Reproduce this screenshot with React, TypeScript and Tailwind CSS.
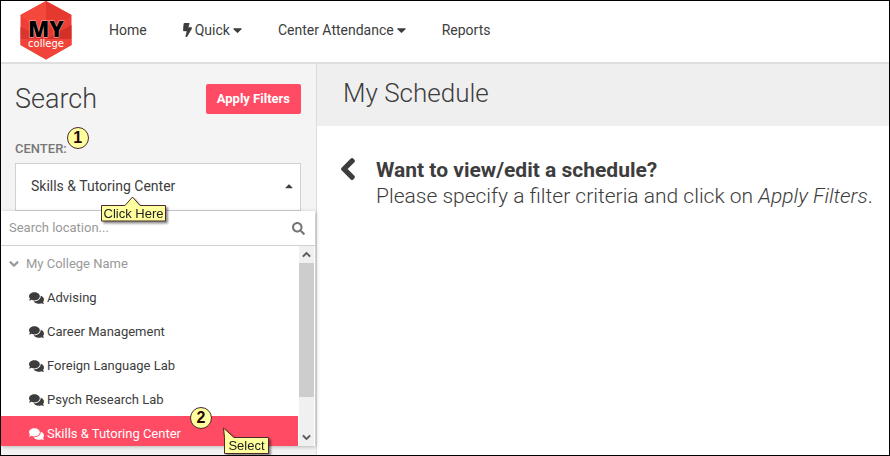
import { FaBolt, FaCaretDown, FaCaretUp, FaChevronDown, FaChevronLeft, FaChevronUp, FaComments, FaSearch } from "react-icons/fa";

const centers = [
  "Advising",
  "Career Management",
  "Foreign Language Lab",
  "Psych Research Lab",
  "Skills & Tutoring Center",
];

const selected = "Skills & Tutoring Center";

function App() {
  return (
    <div className="flex min-h-screen flex-col border border-black bg-white font-['Roboto',sans-serif] text-[#3d3d3d]">
      <Header />
      <div className="flex flex-1">
        <Sidebar />
        <main className="flex-1">
          <div className="bg-[#efefef] px-[26px] pt-3 pb-4">
            <h1 className="text-[26px] leading-[34px] font-light">My Schedule</h1>
          </div>
          <div className="flex gap-5 pt-[31px] pr-2 pl-[23px]">
            <FaChevronLeft className="h-6 w-4 shrink-0 stroke-current stroke-[30px]" />
            <div className="text-[21px] leading-[26px]">
              <h2 className="font-bold">Want to view/edit a schedule?</h2>
              <p className="font-light">
                Please specify a filter criteria and click on <em>Apply Filters</em>.
              </p>
            </div>
          </div>
        </main>
      </div>
    </div>
  );
}

export default App;

function Header() {
  return (
    <header className="flex h-[63px] items-center border-b-2 border-[#dedede] pl-[19px]">
      <a href="#" aria-label="My college" className="mr-[37px] self-start">
        <Logo />
      </a>
      <nav className="flex items-center gap-9 pb-[3px] text-sm">
        <a href="#">Home</a>
        <button className="flex items-center">
          <FaBolt className="mr-[3px] h-[14px] w-[9px] stroke-current stroke-[20px]" />
          Quick
          <FaCaretDown className="ml-[3px] h-4 w-[9px]" />
        </button>
        <button className="flex items-center">
          Center Attendance
          <FaCaretDown className="ml-[3px] h-4 w-[9px]" />
        </button>
        <a href="#">Reports</a>
      </nav>
    </header>
  );
}

function Sidebar() {
  return (
    <aside className="w-[316px] shrink-0 border-r border-[#dcdce2] bg-[#f4f4f4]">
      <div className="flex items-center justify-between pt-[19px] pr-[15px] pl-[14px]">
        <h2 className="text-[27px] leading-8 font-light">Search</h2>
        <button className="h-[30px] rounded-[2px] bg-[#ff4b64] px-[11px] text-[13px] font-bold text-white">
          Apply Filters
        </button>
      </div>
      <div className="pt-6 pr-[15px] pl-[14px]">
        <div className="relative w-fit">
          <span id="center-label" className="block pb-1 text-[13px] leading-5 font-medium text-[#777777]">CENTER:</span>
          <Step n={1} className="absolute -top-3 -right-[22px]" />
        </div>
        <div className="relative">
          <button
            aria-labelledby="center-label center-value"
            aria-haspopup="listbox"
            aria-expanded="true"
            className="flex h-12 w-full items-center justify-between border border-[#cfcfd8] bg-white pr-[7px] pb-0.5 pl-[15px] text-sm"
          >
            <span id="center-value">{selected}</span>
            <FaCaretUp className="h-3 w-2" />
          </button>
          <ClickHereTip />
        </div>
      </div>
      <LocationMenu />
    </aside>
  );
}

function LocationMenu() {
  return (
    <div className="relative mr-px mb-[9px] bg-white text-[13px] shadow-[1px_1px_4px_rgba(0,0,0,0.25)]">
      <div className="flex h-[35px] items-center border-b border-[#cfcfd8] pr-[10px] pl-2">
        <input
          type="text"
          aria-label="Search location"
          placeholder="Search location..."
          className="min-w-0 flex-1 outline-none placeholder:text-[#999999]"
        />
        <FaSearch className="size-[13px] text-[#777777]" />
      </div>
      <div className="flex h-[200px] overflow-hidden">
        <div className="flex-1">
          <div className="flex h-[34px] items-center pt-0.5 pl-2 text-[#999999]">
            <FaChevronDown className="mr-[7px] size-[10px] stroke-current stroke-[40px]" />
            My College Name
          </div>
          <ul role="listbox" aria-labelledby="center-label">
            {centers.map((name) => (
              <li
                key={name}
                role="option"
                aria-selected={name === selected}
                className={
                  name === selected
                    ? "flex h-[34px] items-center bg-[#ff4b64] pt-0.5 pl-7 text-white"
                    : "flex h-[34px] items-center pt-0.5 pl-7"
                }
              >
                <FaComments className="mr-[3px] h-[14px] w-[15px]" />
                {name}
              </li>
            ))}
          </ul>
        </div>
        {/* scrollbar */}
        <div className="mr-px ml-px flex w-[15px] flex-col items-center bg-[#f0f0f0] text-[#505050]">
          <FaChevronUp className="my-1 size-[9px] stroke-current stroke-[30px]" />
          <div className="h-[134px] w-full bg-[#cdcdcd]" />
          <FaChevronDown className="mt-auto mb-1 size-[9px] stroke-current stroke-[30px]" />
        </div>
      </div>
      <Step n={2} className="absolute right-[103px] bottom-[17px]" />
      <SelectTip />
    </div>
  );
}

function Step({ n, className }: { n: number; className: string }) {
  return (
    <span
      className={`flex size-[22px] items-center justify-center rounded-full border border-[#4a2a2a] bg-[#ffff9e] font-['Liberation_Sans',sans-serif] text-base leading-none font-bold text-[#2a0505] ${className}`}
    >
      {n}
    </span>
  );
}

function ClickHereTip() {
  return (
    <div className="absolute top-[33px] left-[86px] z-10 drop-shadow-[2px_2px_1px_rgba(0,0,0,0.45)]">
      <svg width="65" height="26" viewBox="0 0 65 26" className="block">
        <path d="M.5 9.5H24L31.5 1L39 9.5H64.5V25H.5Z" fill="#ffff9e" stroke="#4a2a2a" />
      </svg>
      <span className="absolute inset-x-0 top-[10px] text-center font-['Liberation_Sans',sans-serif] text-[13px] leading-[15px] whitespace-nowrap text-[#222222]">
        Click Here
      </span>
    </div>
  );
}

function SelectTip() {
  return (
    <div className="absolute right-[46px] -bottom-2 z-10 drop-shadow-[2px_2px_1px_rgba(0,0,0,0.45)]">
      <svg width="46" height="27" viewBox="0 0 46 27" className="block">
        <path d="M1.5 10.5L.5 1L11 10.5H45.5V26.5H1.5Z" fill="#ffff9e" stroke="#4a2a2a" />
      </svg>
      <span className="absolute top-[11px] right-0 left-px text-center font-['Liberation_Sans',sans-serif] text-[13px] leading-[15px] text-[#222222]">
        Select
      </span>
    </div>
  );
}

function Logo() {
  return (
    <svg width="52" height="59" viewBox="0 0 52 59">
      <polygon points="26,0 51.5,14 51.5,44 26,58.5 .5,44 .5,14" fill="#ee3e36" />
      <polygon points="26,0 51.5,14 26,38" fill="#e5392f" />
      <polygon points="26,0 26,38 .5,14" fill="#f4483d" />
      <polygon points=".5,38 51.5,38 51.5,44 26,58.5 .5,44" fill="#f04339" />
      <polygon points="26,38 51.5,38 51.5,24" fill="#d3302a" />
      <polygon points=".5,38 26,38 .5,26" fill="#da352e" />
      <text x="26" y="36" textAnchor="middle" fontFamily="Open Sans" fontWeight="800" fontSize="22" fill="#000" stroke="#ffb3ab" strokeWidth="1" paintOrder="stroke">MY</text>
      <text x="26" y="46" textAnchor="middle" fontFamily="DejaVu Sans" fontSize="10" fill="#fff">college</text>
    </svg>
  );
}
